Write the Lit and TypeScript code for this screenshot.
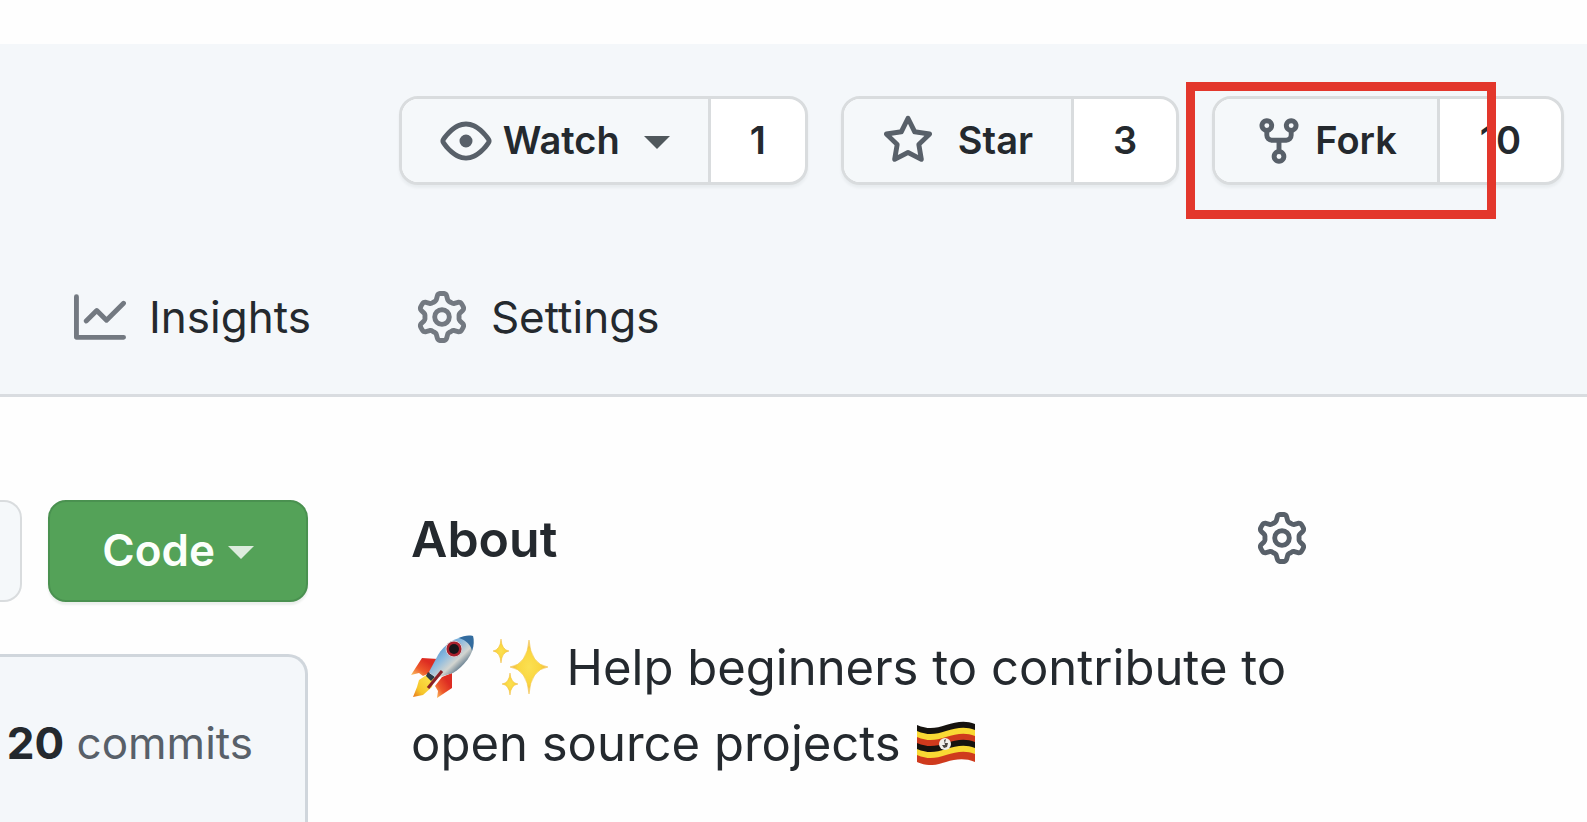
import { LitElement, html, css, svg } from "lit";
import { customElement } from "lit/decorators.js";

const paths = {
  eye: "M1.679 7.932c.412-.621 1.242-1.75 2.366-2.717C5.175 4.242 6.527 3.5 8 3.5c1.473 0 2.824.742 3.955 1.715 1.124.967 1.954 2.096 2.366 2.717a.119.119 0 010 .136c-.412.621-1.242 1.75-2.366 2.717C10.825 11.758 9.473 12.5 8 12.5c-1.473 0-2.824-.742-3.955-1.715C2.92 9.818 2.09 8.69 1.679 8.068a.119.119 0 010-.136zM8 2c-1.981 0-3.67.992-4.933 2.078C1.797 5.169.88 6.423.43 7.1a1.619 1.619 0 000 1.798c.45.678 1.367 1.932 2.637 3.024C4.329 13.008 6.019 14 8 14c1.981 0 3.67-.992 4.933-2.078 1.27-1.091 2.187-2.345 2.637-3.023a1.619 1.619 0 000-1.798c-.45-.678-1.367-1.932-2.637-3.023C11.671 2.992 9.981 2 8 2zm0 8a2 2 0 100-4 2 2 0 000 4z",
  star: "M8 .25a.75.75 0 01.673.418l1.882 3.815 4.21.612a.75.75 0 01.416 1.279l-3.046 2.97.719 4.192a.75.75 0 01-1.088.791L8 12.347l-3.766 1.98a.75.75 0 01-1.088-.79l.72-4.194L.818 6.374a.75.75 0 01.416-1.28l4.21-.611L7.327.668A.75.75 0 018 .25zm0 2.445L6.615 5.5a.75.75 0 01-.564.41l-3.097.45 2.24 2.184a.75.75 0 01.216.664l-.528 3.084 2.769-1.456a.75.75 0 01.698 0l2.77 1.456-.53-3.084a.75.75 0 01.216-.664l2.24-2.183-3.096-.45a.75.75 0 01-.564-.41L8 2.694v.001z",
  fork: "M5 3.25a.75.75 0 11-1.5 0 .75.75 0 011.5 0zm0 2.122a2.25 2.25 0 10-1.5 0v.878A2.25 2.25 0 005.75 8.5h1.5v2.128a2.251 2.251 0 101.5 0V8.5h1.5a2.25 2.25 0 002.25-2.25v-.878a2.25 2.25 0 10-1.5 0v.878a.75.75 0 01-.75.75h-4.5A.75.75 0 015 6.25v-.878zm3.75 7.378a.75.75 0 11-1.5 0 .75.75 0 011.5 0zm3-8.75a.75.75 0 100-1.5.75.75 0 000 1.5z",
  graph: "M1.5 1.75a.75.75 0 00-1.5 0v12.5c0 .414.336.75.75.75h14.5a.75.75 0 000-1.5H1.5V1.75zm14.28 2.53a.75.75 0 00-1.06-1.06L10 7.94 7.53 5.47a.75.75 0 00-1.06 0L3.22 8.72a.75.75 0 001.06 1.06L7 7.06l2.47 2.47a.75.75 0 001.06 0l5.25-5.25z",
  gear: "M7.429 1.525a6.593 6.593 0 011.142 0c.036.003.108.036.137.146l.289 1.105c.147.56.55.967.997 1.189.174.086.341.183.501.29.417.278.97.423 1.53.27l1.102-.303c.11-.03.175.016.195.046.219.31.41.641.573.989.014.031.022.11-.059.19l-.815.806c-.411.406-.562.957-.53 1.456a4.588 4.588 0 010 .582c-.032.499.119 1.05.53 1.456l.815.806c.08.08.073.159.059.19a6.494 6.494 0 01-.573.99c-.02.029-.086.074-.195.045l-1.103-.303c-.559-.153-1.112-.008-1.529.27-.16.107-.327.204-.5.29-.449.222-.851.628-.998 1.189l-.289 1.105c-.029.11-.101.143-.137.146a6.613 6.613 0 01-1.142 0c-.036-.003-.108-.037-.137-.146l-.289-1.105c-.147-.56-.55-.967-.997-1.189a4.502 4.502 0 01-.501-.29c-.417-.278-.97-.423-1.53-.27l-1.102.303c-.11.03-.175-.016-.195-.046a6.492 6.492 0 01-.573-.989c-.014-.031-.022-.11.059-.19l.815-.806c.411-.406.562-.957.53-1.456a4.587 4.587 0 010-.582c.032-.499-.119-1.05-.53-1.456l-.815-.806c-.08-.08-.073-.159-.059-.19a6.44 6.44 0 01.573-.99c.02-.029.086-.075.195-.045l1.103.303c.559.153 1.112.008 1.529-.27.16-.107.327-.204.5-.29.449-.222.851-.628.998-1.189l.289-1.105c.029-.11.101-.143.137-.146zM8 0c-.236 0-.47.01-.701.03-.743.065-1.29.615-1.458 1.261l-.29 1.106c-.017.066-.078.158-.211.224a5.994 5.994 0 00-.668.386c-.123.082-.233.09-.3.071L3.27 2.776c-.644-.177-1.392.02-1.82.63a7.977 7.977 0 00-.704 1.217c-.315.675-.111 1.422.363 1.891l.815.806c.05.048.098.147.088.294a6.084 6.084 0 000 .772c.01.147-.038.246-.088.294l-.815.806c-.474.469-.678 1.216-.363 1.891.2.428.436.835.704 1.218.428.609 1.176.806 1.82.63l1.103-.303c.066-.019.176-.011.299.071.213.143.436.272.668.386.133.066.194.158.212.224l.289 1.106c.169.646.715 1.196 1.458 1.26a8.094 8.094 0 001.402 0c.743-.064 1.29-.614 1.458-1.26l.29-1.106c.017-.066.078-.158.211-.224a5.98 5.98 0 00.668-.386c.123-.082.233-.09.3-.071l1.102.302c.644.177 1.392-.02 1.82-.63.268-.382.505-.789.704-1.217.315-.675.111-1.422-.364-1.891l-.814-.806c-.05-.048-.098-.147-.088-.294a6.1 6.1 0 000-.772c-.01-.147.039-.246.088-.294l.814-.806c.475-.469.679-1.216.364-1.891a7.992 7.992 0 00-.704-1.218c-.428-.609-1.176-.806-1.82-.63l-1.103.303c-.066.019-.176.011-.299-.071a5.991 5.991 0 00-.668-.386c-.133-.066-.194-.158-.212-.224L10.16 1.29C9.99.645 9.444.095 8.701.031A8.094 8.094 0 008 0zm1.5 8a1.5 1.5 0 11-3 0 1.5 1.5 0 013 0zM11 8a3 3 0 11-6 0 3 3 0 016 0z",
};

const icon = (name: keyof typeof paths) => html`
  <svg class="icon" viewBox="0 0 16 16" aria-hidden="true"><path fill-rule="evenodd" d=${paths[name]}></path></svg>`;

const rocket = html`<svg class="rocket" viewBox="0 0 64 64" role="img" aria-label="rocket">
  <defs>
    <linearGradient id="hull" x1="0" y1="0" x2="1" y2="1">
      <stop offset="0.2" stop-color="#4f93cc"/><stop offset="0.42" stop-color="#8dbbdf"/>
      <stop offset="0.6" stop-color="#d3d5d0"/><stop offset="0.78" stop-color="#45647c"/>
    </linearGradient>
    <linearGradient id="flame" x1="1" y1="0" x2="0" y2="1">
      <stop offset="0.2" stop-color="#fbe04a"/><stop offset="0.7" stop-color="#f6c62b"/><stop offset="1" stop-color="#e8731f"/>
    </linearGradient>
    <linearGradient id="fin" x1="1" y1="0" x2="0" y2="1">
      <stop offset="0.3" stop-color="#dd2c22"/><stop offset="0.65" stop-color="#ee5a2b"/><stop offset="1" stop-color="#fbd06a"/>
    </linearGradient>
  </defs>
  <path fill="url(#fin)" d="M27 24 L11 23 L0 40 L8 38 L12 41 L23 36 Z"/>
  <path fill="url(#fin)" d="M41 38 L41 53 L26 63 L27 56 L24 51 L31 42 Z"/>
  <path fill="url(#flame)" d="M17 39 L8 45 L6 52 L2 62 L12 60 L21 52 L23 43 Z"/>
  <path fill="#2a3b49" d="M17 37 L24 42 L20 46 L15 41 Z"/>
  <path fill="url(#hull)" d="M62 1 C47 0 33 9 27 20 L18 37 L25 43 L42 38 C55 30 66 15 62 1 Z"/>
  <path fill="#336c9f" d="M62 1 C57 0 52 1 48 3 C55 5 60 10 61 16 C63 11 63 5 62 1 Z"/>
  <path stroke="#8c2026" stroke-width="3" fill="none" d="M31 36 L17 53"/>
  <circle cx="43" cy="14" r="8" fill="#a9202c"/>
  <circle cx="43" cy="14" r="8" fill="none" stroke="#d7cdd1" stroke-width="1"/>
  <circle cx="43" cy="14" r="5" fill="#191519"/>
</svg>`;

const glint = (x: number, y: number, w: number, h: number) => svg`
  <path fill="url(#gold)" stroke="#f1bd35" stroke-width="0.5"
    d="M${x} ${y - h} Q${x + w * 0.1} ${y - h * 0.1} ${x + w} ${y} Q${x + w * 0.1} ${y + h * 0.1} ${x} ${y + h} Q${x - w * 0.1} ${y + h * 0.1} ${x - w} ${y} Q${x - w * 0.1} ${y - h * 0.1} ${x} ${y - h} Z"/>`;

const sparkles = html`<svg class="sparkles" viewBox="0 0 60 64" role="img" aria-label="sparkles">
  <defs><radialGradient id="gold"><stop offset="0" stop-color="#fbe052"/><stop offset="0.6" stop-color="#fad63f"/><stop offset="1" stop-color="#eeaf45"/></radialGradient></defs>
  ${glint(37, 32, 19, 27)} ${glint(9, 16, 8, 12)} ${glint(18, 49, 8, 11)}
</svg>`;

const stripe = (y: number, color: string) => svg`
  <path fill=${color} d="M0 ${y} C12 ${y + 5} 19 ${y + 3} 29 ${y} S48 ${y - 5} 58 ${y - 1} V${y + 7} C48 ${y + 3} 39 ${y + 4} 29 ${y + 7} S12 ${y + 12} 0 ${y + 7} Z"/>`;

const flag = html`<svg class="flag" viewBox="0 0 58 44" role="img" aria-label="flag of Uganda">
  ${stripe(4, "#16130f")} ${stripe(10, "#f9d934")} ${stripe(16, "#cf3a1d")}
  ${stripe(22, "#16130f")} ${stripe(28, "#f9d934")} ${stripe(34, "#cf3a1d")}
  <circle cx="28" cy="23" r="6" fill="#f1eeea"/>
  <path fill="#4a4542" d="M27 19 L29 18 L28 22 L31 22 L30 26 L27 27 L25 24 L28 24 Z"/>
</svg>`;

@customElement("app-root")
export class AppRoot extends LitElement {
  static styles = css`
    :host {
      display: flex;
      flex-direction: column;
      height: 100vh;
      overflow: hidden;
      background: #fefefe;
      color: #24292e;
      font-family: Inter, "Noto Sans", sans-serif;
    }
    *, *::before, *::after { box-sizing: border-box; }
    a { color: inherit; text-decoration: none; }
    button { font-family: inherit; color: inherit; margin: 0; cursor: pointer; }
    .icon { width: 52px; height: 52px; flex: none; fill: currentColor; display: block; }
    .caret {
      width: 0;
      height: 0;
      margin-top: 3px;
      border: 13px solid transparent;
      border-top-color: currentColor;
      border-bottom: 0;
    }

    .header {
      flex: none;
      margin-top: 44px;
      padding-top: 52px;
      background: #f4f7fa;
      border-bottom: 3px solid #d9dce0;
    }
    .actions { display: flex; justify-content: flex-end; gap: 33px; padding-right: 23px; }
    .group {
      position: relative;
      display: flex;
      height: 89px;
      border: 3px solid #d9dcde;
      border-radius: 19px;
      background: #fff;
      box-shadow: 0 3px 3px rgba(27, 31, 35, 0.05);
      font-size: 38px;
      font-weight: 600;
      line-height: 48px;
    }
    .action {
      display: flex;
      align-items: center;
      padding: 0 38px;
      border: 0;
      border-right: 3px solid #d9dcde;
      border-radius: 16px 0 0 16px;
      background: #f5f8fa;
      font-size: inherit;
      font-weight: inherit;
      line-height: inherit;
    }
    .action .icon { color: #586069; }
    .label { padding-bottom: 2px; }
    .watch { gap: 11px; }
    .watch .caret { margin-left: 13px; color: #50585c; }
    .star { gap: 24px; }
    .fork { gap: 10px; padding-right: 40px; }
    .count { display: flex; align-items: center; padding: 0 39px 2px; }
    .fork + .count { padding: 0 40px 2px; }
    .highlight {
      position: absolute;
      top: -17px;
      left: -29px;
      width: 310px;
      height: 137px;
      border: 9px solid #e3372c;
      pointer-events: none;
    }

    .tabs { display: flex; gap: 105px; padding: 104px 74px 49px; }
    .tab { display: flex; align-items: center; gap: 23px; font-size: 44px; line-height: 56px; }
    .tab .icon { color: #737981; }

    .main {
      flex: 1;
      min-height: 0;
      display: grid;
      grid-template-columns: 308px minmax(0, 1fr);
      gap: 103px;
      padding: 103px 279px 0 0;
    }
    .files { display: flex; flex-direction: column; gap: 52px; min-height: 0; }
    .toolbar { flex: none; display: flex; justify-content: space-between; }
    .stub {
      width: 22px;
      padding: 0;
      border: 2px solid #d9dcde;
      border-left: 0;
      border-radius: 0 18px 18px 0;
      background: #f5f8fa;
    }
    .code {
      display: flex;
      align-items: center;
      gap: 13px;
      padding: 19px 52px;
      border: 2px solid #4a9150;
      border-radius: 18px;
      background: #54a258;
      box-shadow: 0 3px 2px rgba(27, 60, 35, 0.08);
      color: #fbfffb;
      font-size: 44px;
      font-weight: 600;
      line-height: 58px;
    }
    .code .caret { color: #dcecdd; }
    .commits {
      flex: 1;
      padding: 58px 52px 0 6px;
      border: 3px solid #d0d6dc;
      border-left: 0;
      border-bottom: 0;
      border-radius: 0 20px 0 0;
      background: #f4f7fa;
      color: #586069;
      font-size: 44px;
      line-height: 56px;
      text-align: right;
      white-space: nowrap;
    }
    .commits strong { color: #24292e; font-weight: 700; }

    .title { display: flex; align-items: center; justify-content: space-between; padding-top: 7px; }
    h2 { margin: 0; padding-top: 2px; font-size: 50px; font-weight: 600; line-height: 60px; }
    .edit { padding: 0; border: 0; background: none; color: #586069; }
    .text { margin: 61px 0 0; font-size: 49px; line-height: 76px; }
    .rocket, .sparkles { height: 64px; vertical-align: -14px; }
    .rocket { width: 64px; }
    .sparkles { width: 60px; margin: 0 1px 0 3px; }
    .flag { width: 58px; height: 44px; margin-left: 2px; vertical-align: -4px; }
  `;

  render() {
    return html`
      <header class="header">
        <div class="actions">
          <div class="group">
            <button class="action watch">${icon("eye")}<span class="label">Watch</span><span class="caret"></span></button>
            <a class="count" href="#watchers">1</a>
          </div>
          <div class="group">
            <button class="action star">${icon("star")}<span class="label">Star</span></button>
            <a class="count" href="#stargazers">3</a>
          </div>
          <div class="group">
            <button class="action fork">${icon("fork")}<span class="label">Fork</span></button>
            <a class="count" href="#forks">10</a>
            <div class="highlight"></div>
          </div>
        </div>
        <nav class="tabs">
          <a class="tab" href="#insights">${icon("graph")}<span>Insights</span></a>
          <a class="tab" href="#settings">${icon("gear")}<span>Settings</span></a>
        </nav>
      </header>
      <main class="main">
        <section class="files">
          <div class="toolbar">
            <button class="stub" aria-label="Add file"></button>
            <button class="code"><span class="label">Code</span><span class="caret"></span></button>
          </div>
          <div class="commits"><a href="#commits"><strong>20</strong> commits</a></div>
        </section>
        <aside>
          <div class="title">
            <h2>About</h2>
            <button class="edit" aria-label="Edit repository details">${icon("gear")}</button>
          </div>
          <p class="text">${rocket} ${sparkles} Help beginners to contribute to open source projects ${flag}</p>
        </aside>
      </main>
    `;
  }
}
